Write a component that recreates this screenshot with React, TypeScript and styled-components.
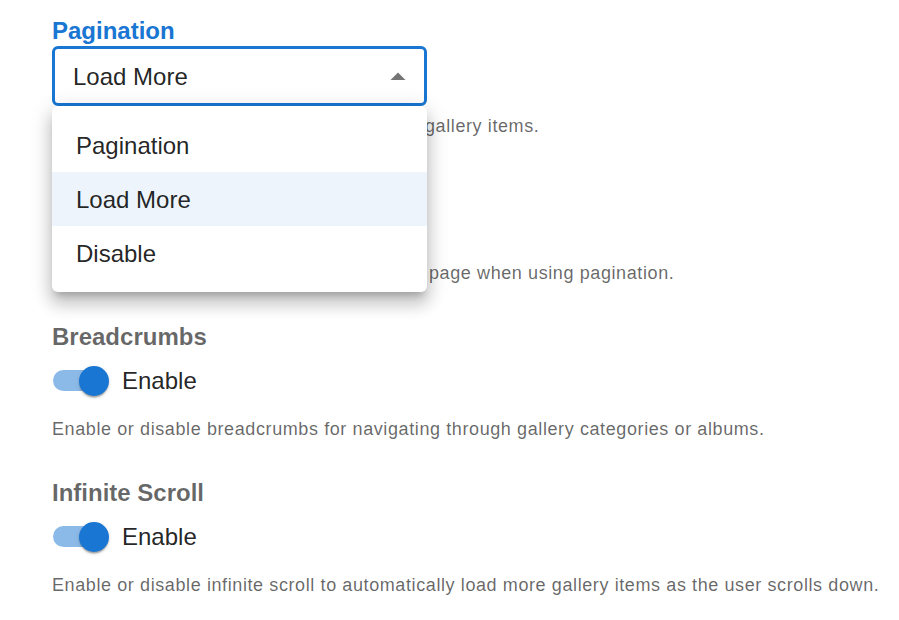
import React from 'react'
import styled, { createGlobalStyle } from 'styled-components'

const GlobalStyle = createGlobalStyle`
  html, body {
    margin: 0;
    padding: 0;
    background: #ffffff;
    font-family: "Liberation Sans", Arial, Helvetica, sans-serif;
  }
`

const Page = styled.div`
  display: flex;
  flex-direction: column;
  gap: 34px;
  padding: 16px 0 0 52px;
`

const Section = styled.section`
  display: flex;
  flex-direction: column;
  align-items: flex-start;
`

const Label = styled.div<{ $active?: boolean }>`
  font-size: 24px;
  font-weight: 700;
  line-height: 29px;
  color: ${p => (p.$active ? '#1976d2' : 'rgba(0, 0, 0, 0.6)')};
  margin-bottom: 1px;
`

const SelectWrap = styled.div`
  position: relative;
  width: 375px;
`

const SelectBox = styled.div`
  box-sizing: border-box;
  height: 60px;
  border: 3px solid #1976d2;
  border-radius: 6px;
  padding: 1px 18px 0;
  display: flex;
  align-items: center;
  justify-content: space-between;
  font-size: 24px;
  color: rgba(0, 0, 0, 0.87);
`

const Arrow = styled.svg`
  width: 36px;
  height: 36px;
  margin-right: -10px;
  fill: rgba(0, 0, 0, 0.54);
  transform: rotate(180deg);
`

const Menu = styled.ul`
  position: absolute;
  top: 100%;
  left: 0;
  width: 375px;
  margin: 0;
  padding: 12px 0;
  list-style: none;
  background: #fff;
  border-radius: 6px;
  box-shadow: 0px 7px 7px -4px rgba(0, 0, 0, 0.2), 0px 12px 15px 1.5px rgba(0, 0, 0, 0.14),
    0px 4.5px 21px 3px rgba(0, 0, 0, 0.12);
  z-index: 10;
`

const MenuItem = styled.li<{ $selected?: boolean }>`
  padding: 10px 24px 8px;
  font-size: 24px;
  line-height: 36px;
  color: rgba(0, 0, 0, 0.87);
  background: ${p => (p.$selected ? 'rgba(25, 118, 210, 0.08)' : 'transparent')};
`

const TextInput = styled.div`
  box-sizing: border-box;
  width: 375px;
  height: 48px;
  border: 1.5px solid rgba(0, 0, 0, 0.23);
  border-radius: 6px;
  padding: 0 18px;
  display: flex;
  align-items: center;
  font-size: 24px;
  color: rgba(0, 0, 0, 0.87);
`

const Helper = styled.p`
  margin: 5px 0 0;
  font-size: 18px;
  line-height: 30px;
  letter-spacing: 0.6px;
  color: rgba(0, 0, 0, 0.6);
`

const SwitchRow = styled.label`
  display: flex;
  align-items: center;
  height: 57px;
  font-size: 24px;
  line-height: 36px;
  color: rgba(0, 0, 0, 0.87);
`

const SwitchBase = styled.span`
  position: relative;
  width: 70px;
  height: 57px;
  flex-shrink: 0;
`

const Track = styled.span`
  position: absolute;
  left: 1px;
  top: 18px;
  width: 51px;
  height: 21px;
  border-radius: 10.5px;
  background: #1976d2;
  opacity: 0.5;
`

const Thumb = styled.span`
  position: absolute;
  left: 27px;
  top: 13.5px;
  width: 30px;
  height: 30px;
  border-radius: 50%;
  background: #1976d2;
  box-shadow: 0px 3px 1.5px -1.5px rgba(0, 0, 0, 0.2), 0px 1.5px 1.5px 0px rgba(0, 0, 0, 0.14),
    0px 1.5px 4.5px 0px rgba(0, 0, 0, 0.12);
`

const Toggle = ({ label }: { label: string }) => (
  <SwitchRow>
    <SwitchBase>
      <Track />
      <Thumb />
    </SwitchBase>
    {label}
  </SwitchRow>
)

const options = ['Pagination', 'Load More', 'Disable']

const App = () => {
  const value = 'Load More'
  return (
    <>
      <GlobalStyle />
      <Page>
        <Section>
          <Label $active>Pagination</Label>
          <SelectWrap>
            <SelectBox>
              {value}
              <Arrow viewBox="0 0 24 24">
                <path d="M7 10l5 5 5-5z" />
              </Arrow>
            </SelectBox>
            <Menu>
              {options.map(o => (
                <MenuItem key={o} $selected={o === value}>
                  {o}
                </MenuItem>
              ))}
            </Menu>
          </SelectWrap>
          <Helper>Select how visitors navigate and load more gallery items.</Helper>
        </Section>

        <Section>
          <Label>Items Per Page</Label>
          <TextInput>12</TextInput>
          <Helper>Set the number of items displayed on every page when using pagination.</Helper>
        </Section>

        <Section>
          <Label>Breadcrumbs</Label>
          <Toggle label="Enable" />
          <Helper>Enable or disable breadcrumbs for navigating through gallery categories or albums.</Helper>
        </Section>

        <Section>
          <Label>Infinite Scroll</Label>
          <Toggle label="Enable" />
          <Helper>
            Enable or disable infinite scroll to automatically load more gallery items as the user scrolls down.
          </Helper>
        </Section>
      </Page>
    </>
  )
}

export default App
